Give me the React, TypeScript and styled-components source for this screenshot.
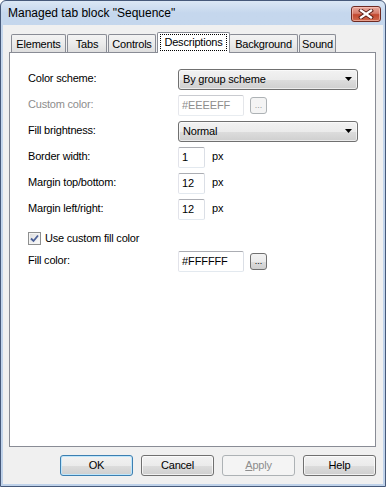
import React from "react";
import styled, { createGlobalStyle, css } from "styled-components";

const Global = createGlobalStyle`
  html, body { margin: 0; padding: 0; background: #ffffff; }
  body {
    font-family: "Liberation Sans", Arial, sans-serif;
    font-size: 11px;
    color: #000;
  }
  * { box-sizing: border-box; }
`;

const Window = styled.div`
  width: 386px;
  height: 487px;
  border: 1px solid #46597a;
  border-radius: 6px 6px 0 0;
  background: linear-gradient(#dbe7f5 0px, #c5d7ed 12px, #bfd2ea 100%);
  padding: 0 2px 2px;
  display: flex;
  flex-direction: column;
  overflow: hidden;
`;

const TitleBar = styled.div`
  height: 24px;
  flex: none;
  display: flex;
  align-items: center;
  padding: 0 2px 0 5px;
`;

const Title = styled.div`
  flex: 1;
  font-size: 12px;
  color: #000;
  padding-bottom: 1px;
`;

const CloseButton = styled.div`
  width: 30px;
  height: 16px;
  margin-top: 1px;
  border: 1px solid #6e2a22;
  border-radius: 3px;
  background: linear-gradient(#e7a89c 0%, #d67d6c 45%, #c2482f 55%, #cf6a4f 100%);
  box-shadow: inset 0 0 0 1px rgba(255, 210, 200, 0.55);
  display: flex;
  align-items: center;
  justify-content: center;
`;

const Client = styled.div`
  flex: 1;
  background: #f0f0f0;
  display: flex;
  flex-direction: column;
  padding: 7px 7px 8px 6px;
`;

const TabStrip = styled.div`
  height: 20px;
  flex: none;
  display: flex;
  align-items: flex-end;
  padding-left: 2px;
  position: relative;
  z-index: 1;
`;

const Tab = styled.div<{ $w: number; $active?: boolean }>`
  width: ${(p) => p.$w}px;
  height: 18px;
  margin-right: 1px;
  border: 1px solid #898c95;
  border-bottom: none;
  border-radius: 2px 2px 0 0;
  background: linear-gradient(#f3f3f3 0%, #ebebeb 50%, #dedede 100%);
  display: flex;
  align-items: center;
  justify-content: center;
  letter-spacing: -0.2px;
  padding-top: 1px;
  ${(p) =>
    p.$active &&
    css`
      height: 21px;
      margin-bottom: -1px;
      margin-right: -1px;
      background: #ffffff;
      position: relative;
      z-index: 2;
      align-items: flex-start;
      padding-top: 1px;
    `}
`;

const FocusRect = styled.span`
  border: 1px dotted #000;
  padding: 1px 3px 2px;
  width: 67px;
  text-align: center;
`;

const Panel = styled.div`
  flex: 1;
  background: #ffffff;
  border: 1px solid #898c95;
  padding: 16px 17px 0 18px;
  display: flex;
  flex-direction: column;
  gap: 5px;
`;

const Row = styled.div`
  display: grid;
  grid-template-columns: 150px auto;
  align-items: center;
  height: 21px;
`;

const Label = styled.div<{ $disabled?: boolean }>`
  color: ${(p) => (p.$disabled ? "#8d8d8d" : "#000")};
  letter-spacing: -0.2px;
  padding-bottom: 3px;
`;

const Field = styled.div`
  display: flex;
  align-items: center;
`;

const Select = styled.div`
  width: 180px;
  height: 21px;
  border: 1px solid #707070;
  border-radius: 3px;
  background: linear-gradient(#f2f2f2 0%, #ebebeb 50%, #dddddd 51%, #cfcfcf 100%);
  box-shadow: inset 0 0 0 1px rgba(255, 255, 255, 0.6);
  display: flex;
  align-items: center;
  justify-content: space-between;
  padding: 0 5px 1px 4px;
  letter-spacing: -0.2px;
`;

const TextBox = styled.div<{ $w: number; $disabled?: boolean }>`
  width: ${(p) => p.$w}px;
  height: 21px;
  border: 1px solid;
  border-color: #abadb3 #dbdfe6 #e3e9ef #e2e3ea;
  border-radius: 2px;
  background: #ffffff;
  display: flex;
  align-items: center;
  padding: 0 0 1px 3px;
  letter-spacing: -0.1px;
  color: ${(p) => (p.$disabled ? "#8d8d8d" : "#000")};
  ${(p) =>
    p.$disabled &&
    css`
      border-color: #c9cbd0 #e4e6ea #e8ecf0 #e6e7ec;
    `}
`;

const DotsButton = styled.div<{ $disabled?: boolean }>`
  width: 17px;
  height: 17px;
  margin-left: 6px;
  border: 1px solid #707070;
  border-radius: 3px;
  background: linear-gradient(#f2f2f2 0%, #ebebeb 50%, #dddddd 51%, #cfcfcf 100%);
  display: flex;
  align-items: flex-end;
  justify-content: center;
  padding-bottom: 3px;
  font-size: 9px;
  line-height: 9px;
  color: #000;
  ${(p) =>
    p.$disabled &&
    css`
      border-color: #adb2b5;
      background: #f4f4f4;
      color: #9a9a9a;
    `}
`;

const Unit = styled.span`
  margin-left: 7px;
  padding-bottom: 3px;
`;

const CheckRow = styled.label`
  display: flex;
  align-items: center;
  height: 21px;
  margin: 2px 0 -2px;
  letter-spacing: -0.2px;
`;

const CheckBox = styled.span`
  width: 13px;
  height: 13px;
  border: 1px solid #8e8f8f;
  background: linear-gradient(135deg, #dcdcdc, #fdfdfd);
  box-shadow: inset 0 0 0 1px #f4f4f4;
  display: flex;
  align-items: center;
  justify-content: center;
  margin-right: 4px;
  margin-top: 1px;
`;

const ButtonBar = styled.div`
  flex: none;
  display: flex;
  justify-content: flex-end;
  gap: 8px;
  margin-top: 8px;
`;

const Button = styled.div<{ $primary?: boolean; $disabled?: boolean }>`
  width: 73px;
  height: 21px;
  border: 1px solid #707070;
  border-radius: 3px;
  background: linear-gradient(#f2f2f2 0%, #ebebeb 50%, #dddddd 51%, #cfcfcf 100%);
  box-shadow: inset 0 0 0 1px rgba(255, 255, 255, 0.7);
  display: flex;
  align-items: center;
  justify-content: center;
  padding-bottom: 1px;
  letter-spacing: -0.2px;
  ${(p) =>
    p.$primary &&
    css`
      border-color: #3c7fb1;
      box-shadow: inset 0 0 0 1px #bfe6fb;
    `}
  ${(p) =>
    p.$disabled &&
    css`
      border-color: #adb2b5;
      background: #f4f4f4;
      box-shadow: none;
      color: #8d8d8d;
    `}
`;

const Arrow = () => (
  <svg width="7" height="4" viewBox="0 0 7 4">
    <path d="M0 0 H7 L3.5 4 Z" fill="#000" />
  </svg>
);

const Check = () => (
  <svg width="9" height="9" viewBox="0 0 9 9">
    <path d="M1 4.5 L3.5 7 L8 1.5" fill="none" stroke="#4a5f97" strokeWidth="1.8" />
  </svg>
);

const CloseX = () => (
  <svg width="16" height="10" viewBox="0 0 16 10">
    <path d="M3 1.5 L13 8.5 M13 1.5 L3 8.5" stroke="#5a1e16" strokeWidth="4" strokeLinecap="square" />
    <path d="M3 1.5 L13 8.5 M13 1.5 L3 8.5" stroke="#ffffff" strokeWidth="2.2" strokeLinecap="square" />
  </svg>
);

const tabs = [
  { label: "Elements", w: 55 },
  { label: "Tabs", w: 40 },
  { label: "Controls", w: 48 },
  { label: "Descriptions", w: 73, active: true },
  { label: "Background", w: 69 },
  { label: "Sound", w: 37 },
];

export default function App() {
  return (
    <>
      <Global />
      <Window>
        <TitleBar>
          <Title>Managed tab block "Sequence"</Title>
          <CloseButton>
            <CloseX />
          </CloseButton>
        </TitleBar>
        <Client>
          <TabStrip>
            {tabs.map((t) => (
              <Tab key={t.label} $w={t.w} $active={t.active}>
                {t.active ? <FocusRect>{t.label}</FocusRect> : t.label}
              </Tab>
            ))}
          </TabStrip>
          <Panel>
            <Row>
              <Label>Color scheme:</Label>
              <Field>
                <Select>
                  <span>By group scheme</span>
                  <Arrow />
                </Select>
              </Field>
            </Row>
            <Row>
              <Label $disabled>Custom color:</Label>
              <Field>
                <TextBox $w={66} $disabled>#EEEEFF</TextBox>
                <DotsButton $disabled>...</DotsButton>
              </Field>
            </Row>
            <Row>
              <Label>Fill brightness:</Label>
              <Field>
                <Select>
                  <span>Normal</span>
                  <Arrow />
                </Select>
              </Field>
            </Row>
            <Row>
              <Label>Border width:</Label>
              <Field>
                <TextBox $w={27}>1</TextBox>
                <Unit>px</Unit>
              </Field>
            </Row>
            <Row>
              <Label>Margin top/bottom:</Label>
              <Field>
                <TextBox $w={27}>12</TextBox>
                <Unit>px</Unit>
              </Field>
            </Row>
            <Row>
              <Label>Margin left/right:</Label>
              <Field>
                <TextBox $w={27}>12</TextBox>
                <Unit>px</Unit>
              </Field>
            </Row>
            <CheckRow>
              <CheckBox>
                <Check />
              </CheckBox>
              Use custom fill color
            </CheckRow>
            <Row>
              <Label>Fill color:</Label>
              <Field>
                <TextBox $w={66}>#FFFFFF</TextBox>
                <DotsButton>...</DotsButton>
              </Field>
            </Row>
          </Panel>
          <ButtonBar>
            <Button $primary>OK</Button>
            <Button>Cancel</Button>
            <Button $disabled>
              <span>
                <u>A</u>pply
              </span>
            </Button>
            <Button>Help</Button>
          </ButtonBar>
        </Client>
      </Window>
    </>
  );
}
